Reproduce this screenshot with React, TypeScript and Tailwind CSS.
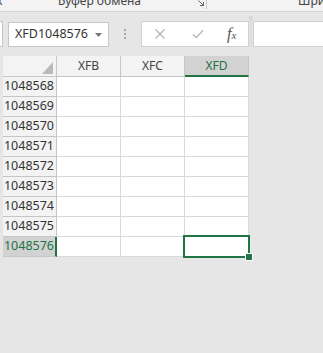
import React from "react";

const rows = [1048568, 1048569, 1048570, 1048571, 1048572, 1048573, 1048574, 1048575, 1048576];
const cols = ["XFB", "XFC", "XFD"];

export default function App() {
  return (
    <div className="w-[323px] h-[353px] bg-[#e6e6e6] overflow-hidden font-['Noto_Sans',sans-serif] text-[#333]">
      {/* Ribbon bottom strip */}
      <div className="h-[12px] bg-[#f3f3f3] border-b border-[#d5d5d5] overflow-hidden flex items-start text-[12px] leading-[16px] text-[#444]">
        <div className="w-[58px] shrink-0 -mt-[7px] -ml-[4px] pl-0">к</div>
        <div className="w-[139px] shrink-0 -mt-[7px] ml-[4px]">Буфер обмена</div>
        <svg width="12" height="10" viewBox="0 0 12 10" className="shrink-0">
          <path d="M1.5 0.5 L6.5 5.5 M6.5 2 V5.5 H3" stroke="#666" strokeWidth="1" fill="none" />
          <path d="M9.5 0 V9" stroke="#c8c8c8" strokeWidth="1" />
        </svg>
        <div className="w-[89px] shrink-0" />
        <div className="shrink-0 -mt-[7px] whitespace-nowrap">Шрифт</div>
      </div>

      {/* Formula bar */}
      <div className="mt-[9px] h-[26px] flex items-stretch">
        <div className="w-[3px] shrink-0 bg-white border-y border-r border-[#c6c6c6]" />
        <div className="ml-[5px] mt-[1px] w-[101px] shrink-0 bg-white border border-[#c6c6c6] flex items-center justify-between pl-[6px] pr-[6px]">
          <span className="text-[12.5px] leading-none text-[#333]">XFD1048576</span>
          <svg width="7" height="4" viewBox="0 0 7 4">
            <path d="M0 0 H7 L3.5 4 Z" fill="#777" />
          </svg>
        </div>
        <div className="w-[32px] shrink-0 flex flex-col items-center justify-center gap-[2px]">
          <div className="w-[2px] h-[2px] bg-[#a8a8a8]" />
          <div className="w-[2px] h-[2px] bg-[#a8a8a8]" />
          <div className="w-[2px] h-[2px] bg-[#a8a8a8]" />
        </div>
        <div className="w-[108px] shrink-0 bg-white border border-[#d0d0d0] flex items-center">
          <svg width="12" height="12" viewBox="0 0 12 12" className="ml-[12px]">
            <path d="M1.5 1.5 L10.5 10.5 M10.5 1.5 L1.5 10.5" stroke="#b3b3b3" strokeWidth="1.2" fill="none" />
          </svg>
          <svg width="12" height="10" viewBox="0 0 12 10" className="ml-[26px]">
            <path d="M1 5.5 L4.3 8.6 L11 1.2" stroke="#b3b3b3" strokeWidth="1.3" fill="none" />
          </svg>
          <span className="ml-[23px] font-['Liberation_Serif',serif] italic text-[16px] leading-none text-[#555]">
            f<span className="text-[11px]">x</span>
          </span>
        </div>
        <div className="w-[4px] shrink-0 flex flex-col items-center">
          <div className="mt-[-5px] w-[4px] h-[4px] rounded-full border border-[#c8c8c8] bg-[#f4f4f4]" />
          <div className="w-[2px] flex-1 bg-[#dcdcdc]" />
        </div>
        <div className="flex-1 bg-white border-y border-l border-[#d0d0d0]" />
      </div>

      {/* Grid */}
      <div className="mt-[9px] ml-[3px] relative w-[246px]">
        <div className="grid grid-cols-[54px_64px_64px_64px] text-[12px]">
          {/* header row */}
          <div className="h-[21px] bg-[#f3f3f3] border-r border-b border-[#c6c6c6] flex items-end justify-end pr-[2px] pb-[1px]">
            <svg width="13" height="14" viewBox="0 0 13 14">
              <path d="M12 1 V13 H1 Z" fill="#b9b9b9" />
            </svg>
          </div>
          {cols.map((c) => {
            const sel = c === "XFD";
            return (
              <div
                key={c}
                className={
                  sel
                    ? "h-[21px] bg-[#d2d2d2] border-r border-[#c6c6c6] border-b-2 border-b-[#217346] flex items-center justify-center text-[#217346] leading-none"
                    : "h-[21px] bg-[#f3f3f3] border-r border-b border-[#c6c6c6] flex items-center justify-center text-[#444] leading-none"
                }
              >
                <span className={sel ? "mt-[1px]" : ""}>{c}</span>
              </div>
            );
          })}
          {rows.map((r) => {
            const sel = r === 1048576;
            return (
              <React.Fragment key={r}>
                <div
                  className={
                    sel
                      ? "h-[20px] bg-[#d2d2d2] border-b border-[#c6c6c6] border-r-2 border-r-[#217346] flex items-center justify-end pr-[1px] text-[#217346] text-[12.5px] leading-none"
                      : "h-[20px] bg-[#f3f3f3] border-r border-b border-[#c6c6c6] flex items-center justify-end pr-[2px] text-[#333] text-[12.5px] leading-none"
                  }
                >
                  {r}
                </div>
                {cols.map((c) => (
                  <div key={c} className="h-[20px] bg-white border-r border-b border-[#d9d9d9]" />
                ))}
              </React.Fragment>
            );
          })}
        </div>
        {/* selection box */}
        <div className="absolute left-[180px] top-[179px] w-[67px] h-[23px] border-2 border-[#217346]" />
        <div className="absolute left-[242px] top-[197px] w-[8px] h-[8px] bg-white p-[1px]">
          <div className="w-[6px] h-[6px] bg-[#217346]" />
        </div>
      </div>
    </div>
  );
}
